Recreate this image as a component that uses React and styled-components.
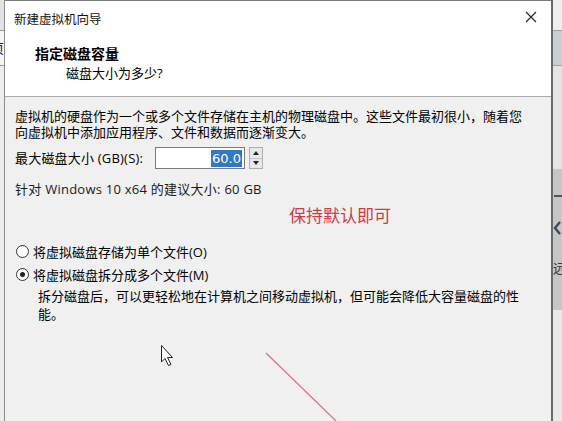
import React from 'react';
import styled, { createGlobalStyle } from 'styled-components';

const GlobalStyle = createGlobalStyle`
  html, body {
    margin: 0;
    padding: 0;
    background: #e6e6e6;
  }
  body {
    font-family: "Open Sans", "Noto Sans CJK SC", sans-serif;
    color: #000;
  }
`;

// #region Styles

const Screen = styled.div`
  position: relative;
  display: flex;
  width: 562px;
  height: 421px;
  overflow: hidden;
`;

const LeftEdge = styled.div`
  width: 4px;
  flex: none;
  background: #ececec;
  overflow: hidden;
  display: flex;
  flex-direction: column;
`;

const EdgeCell = styled.div`
  height: ${p => p.$h}px;
  flex: none;
  background: ${p => p.$bg || 'transparent'};
  border-bottom: ${p => (p.$line ? '1px solid #9a9a9a' : 'none')};
  font-family: "Noto Sans CJK SC", sans-serif;
  font-size: 13px;
  line-height: ${p => p.$h}px;
  white-space: nowrap;
  text-indent: -9px;
  color: #222;
`;

const Dialog = styled.div`
  flex: 1;
  display: flex;
  flex-direction: column;
  border-left: 1px solid #8c8c8c;
  border-right: 2px solid #6a6a6a;
  background: #f0f0f0;
`;

const Header = styled.div`
  height: 95px;
  background: #fff;
  border-top: 1px solid #7a7a7a;
  border-bottom: 1px solid #a9a9a9;
  display: flex;
  flex-direction: column;
`;

const TitleBar = styled.div`
  display: flex;
  align-items: center;
  justify-content: space-between;
  height: 34px;
  padding: 0 10px 0 9px;
`;

const WindowTitle = styled.span`
  font-family: "Noto Sans CJK SC", sans-serif;
  font-size: 12.5px;
  color: #111;
`;

const CloseButton = styled.span`
  display: flex;
  align-items: center;
  justify-content: center;
  width: 20px;
  height: 20px;
  margin-top: -2px;
`;

const Heading = styled.div`
  padding-left: 30px;
  margin-top: 9px;
  font-family: "Noto Sans CJK SC", sans-serif;
  font-size: 14px;
  font-weight: 700;
  line-height: 18px;
`;

const SubHeading = styled.div`
  padding-left: 61px;
  font-size: 13px;
  line-height: 20px;
  margin-top: 1px;
`;

const Body = styled.div`
  flex: 1;
  padding: 11px 10px 0 10px;
  font-size: 13px;
  display: flex;
  flex-direction: column;
`;

const Paragraph = styled.p`
  margin: 0;
  line-height: 16px;
  white-space: nowrap;
`;

const SizeRow = styled.div`
  display: flex;
  align-items: center;
  margin-top: 7px;
  height: 22px;
`;

const SizeLabel = styled.span`
  width: 140px;
  line-height: 22px;
  white-space: nowrap;
  letter-spacing: 0.2px;
`;

const NumberBox = styled.div`
  width: 86px;
  height: 20px;
  border: 1px solid #7a7a7a;
  background: #fff;
  display: flex;
  align-items: center;
  justify-content: flex-end;
  padding-right: 2px;
`;

const Selected = styled.span`
  background: #3178c6;
  color: #fff;
  font-family: "DejaVu Sans", "Noto Sans", sans-serif;
  font-size: 13px;
  line-height: 17px;
  padding: 0 1px;
`;

const Spinner = styled.div`
  width: 12px;
  height: 20px;
  margin-left: 4px;
  border: 1px solid #adadad;
  background: #e9e9e9;
  display: flex;
  flex-direction: column;
`;

const SpinHalf = styled.div`
  flex: 1;
  display: flex;
  align-items: center;
  justify-content: center;
  border-top: ${p => (p.$lower ? '1px solid #c4c4c4' : 'none')};
`;

const Hint = styled.div`
  margin-top: 13px;
  line-height: 15px;
  color: #1a1a1a;
  letter-spacing: 0.25px;
`;

const Note = styled.div`
  margin: 7px 0 0 274px;
  font-family: "Noto Sans CJK SC", sans-serif;
  font-size: 17px;
  line-height: 21px;
  color: #cc3d47;
`;

const RadioRow = styled.label`
  display: flex;
  align-items: center;
  height: 18px;
  margin-top: ${p => p.$gap}px;
  gap: 4px;
  margin-left: 1px;
`;

const RadioDot = styled.span`
  width: 11px;
  height: 11px;
  border-radius: 50%;
  border: 1px solid #333;
  background: #fff;
  display: flex;
  align-items: center;
  justify-content: center;
  &::after {
    content: '';
    width: 5px;
    height: 5px;
    border-radius: 50%;
    background: ${p => (p.$checked ? '#222' : 'transparent')};
  }
`;

const Description = styled.p`
  margin: 4px 0 0 23px;
  line-height: 18px;
  white-space: nowrap;
`;

const RightEdge = styled.div`
  width: 9px;
  flex: none;
  display: flex;
  flex-direction: column;
  background: #e8e8e8;
`;

const SideBand = styled.div`
  height: ${p => p.$h}px;
  flex: none;
  background: ${p => p.$bg};
  border-bottom: ${p => (p.$line ? '1px solid #a0a0a0' : 'none')};
  overflow: hidden;
`;

const SideGlyph = styled.span`
  display: block;
  font-family: "Noto Sans CJK SC", sans-serif;
  font-size: 13px;
  line-height: 14px;
  margin-top: ${p => p.$top}px;
  white-space: nowrap;
  color: #333;
`;

const Overlay = styled.svg`
  position: absolute;
  left: 0;
  top: 0;
  pointer-events: none;
`;

// #endregion

function CloseIcon() {
  return (
    <svg width="12" height="12" viewBox="0 0 12 12">
      <path d="M1 1 L11 11 M11 1 L1 11" stroke="#222" strokeWidth="1.1" fill="none" />
    </svg>
  );
}

function SpinArrow({ down }) {
  return (
    <svg width="6" height="4" viewBox="0 0 6 4">
      <path d={down ? 'M0 0 H6 L3 4 Z' : 'M0 4 H6 L3 0 Z'} fill="#222" />
    </svg>
  );
}

export default function App() {
  return (
    <>
      <GlobalStyle />
      <Screen>
        <LeftEdge>
          <EdgeCell $h={30} $line $bg="#e2e2e2" />
          <EdgeCell $h={34} $line $bg="#f4f4f4">页</EdgeCell>
          <EdgeCell $h={356} $bg="#ededed" />
        </LeftEdge>

        <Dialog>
          <Header>
            <TitleBar>
              <WindowTitle>新建虚拟机向导</WindowTitle>
              <CloseButton><CloseIcon /></CloseButton>
            </TitleBar>
            <Heading>指定磁盘容量</Heading>
            <SubHeading>磁盘大小为多少?</SubHeading>
          </Header>

          <Body>
            <Paragraph>
              虚拟机的硬盘作为一个或多个文件存储在主机的物理磁盘中。这些文件最初很小，随着您
              <br />
              向虚拟机中添加应用程序、文件和数据而逐渐变大。
            </Paragraph>

            <SizeRow>
              <SizeLabel>最大磁盘大小 (GB)(S):</SizeLabel>
              <NumberBox><Selected>60.0</Selected></NumberBox>
              <Spinner>
                <SpinHalf><SpinArrow /></SpinHalf>
                <SpinHalf $lower><SpinArrow down /></SpinHalf>
              </Spinner>
            </SizeRow>

            <Hint>针对 Windows 10 x64 的建议大小: 60 GB</Hint>

            <Note>保持默认即可</Note>

            <RadioRow $gap={17}>
              <RadioDot />
              将虚拟磁盘存储为单个文件(O)
            </RadioRow>
            <RadioRow $gap={5}>
              <RadioDot $checked />
              将虚拟磁盘拆分成多个文件(M)
            </RadioRow>
            <Description>
              拆分磁盘后，可以更轻松地在计算机之间移动虚拟机，但可能会降低大容量磁盘的性
              <br />
              能。
            </Description>
          </Body>
        </Dialog>

        <RightEdge>
          <SideBand $h={30} $bg="#eeeeee" $line />
          <SideBand $h={34} $bg="#c9ced6" $line />
          <SideBand $h={103} $bg="#e4e4e4" />
          <SideBand $h={141} $bg="#c6c6c6">
            <SideGlyph $top={92}>远</SideGlyph>
          </SideBand>
          <SideBand $h={111} $bg="#e9e9e9" />
        </RightEdge>

        {/* mouse pointer, red guide stroke and the side panel's back chevron */}
        <Overlay width="562" height="421" viewBox="0 0 562 421">
          <path
            d="M161.5 345.5 V362 L165 358.5 L168.5 365.5 L171 364.5 L167.5 357.5 L172.5 357.5 Z"
            fill="#fff"
            stroke="#222"
            strokeWidth="1"
            strokeLinejoin="round"
          />
          <line x1="266" y1="353" x2="336" y2="421" stroke="#e0707c" strokeWidth="1.2" />
          <line x1="554" y1="196" x2="562" y2="196" stroke="#4a5560" strokeWidth="2" />
          <path d="M560 222 L555 228 L560 234" stroke="#3f4b58" strokeWidth="2.4" fill="none" />
        </Overlay>
      </Screen>
    </>
  );
}
